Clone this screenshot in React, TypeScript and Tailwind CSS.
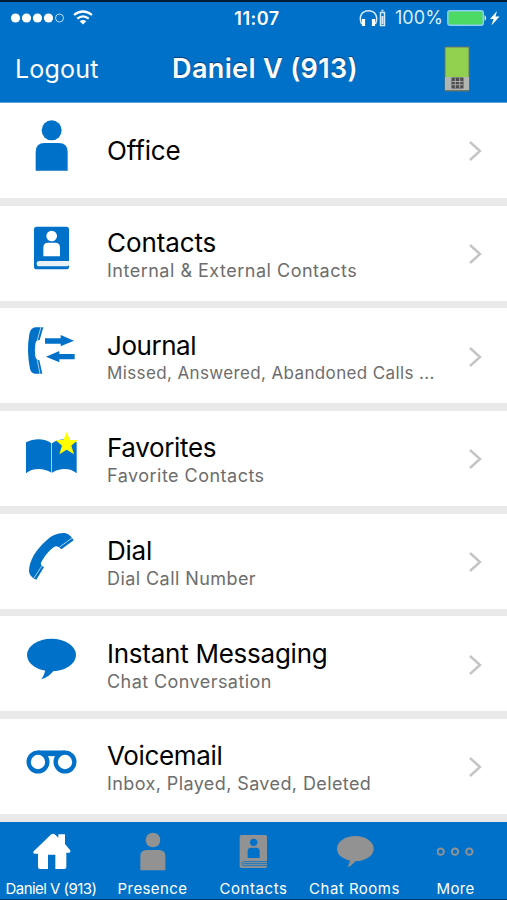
import type { ReactNode } from "react";

type IconProps = { className?: string };

function PersonIcon({ className }: IconProps) {
  return (
    <svg viewBox="0 0 180 285" className={className} fill="currentColor">
      <circle cx="92" cy="82" r="30" />
      <path d="M44 203v-56q0-27 27-27h42q27 0 27 27v56z" />
    </svg>
  );
}

function ContactsIcon({ className }: IconProps) {
  return (
    <svg viewBox="0 0 180 285" className={className} fill="currentColor">
      <rect x="39" y="62" width="105" height="128" rx="8" />
      <circle cx="92" cy="90" r="16" fill="#fff" />
      <path d="M67 151v-26q0-15 14-15h22q14 0 14 15v26z" fill="#fff" />
      <path d="M145 165H55q-8 0-8 8t8 8h82q6 0 9-7z" fill="#e9f1f8" />
    </svg>
  );
}

function JournalIcon({ className }: IconProps) {
  return (
    <svg viewBox="0 0 180 285" className={className} fill="currentColor">
      <path d="M42 58H67L56 96Q45 94 43 108Q40 126 43 145Q45 157 55 157L64 197H42Q30 196 27 182Q16 130 25 78Q29 60 42 58z" />
      <path d="M60 57L49 96M49 157l8 41" stroke="#fff" strokeWidth="2" fill="none" />
      <path d="M72 91h47V81l40 17-40 17v-8H72zM75 146l40-17v9h46v16h-46v9z" />
    </svg>
  );
}

function FavoritesIcon({ className }: IconProps) {
  return (
    <svg viewBox="0 0 180 285" className={className} fill="currentColor">
      <path d="M15 94q18-9 35-9 26 0 41 12v88q-18-11-38-11-23 0-38 13z" />
      <path d="M93 97q15-12 41-12 18 0 33 9v93q-15-13-36-13-21 0-38 11z" />
      <path d="M137 63l10 24h23l-19 17 8 26-22-14-22 14 8-26-19-17h23z" fill="#ffff00" />
    </svg>
  );
}

function DialIcon({ className }: IconProps) {
  return (
    <svg viewBox="0 0 180 285" className={className} fill="currentColor">
      <path d="M24 172C25 138 45 107 77 79C90 66 108 57 127 57C140 57 150 65 158 79L121 106Q113 96 104 97C88 103 68 130 59 149Q62 158 69 159L46 197Q26 190 24 172z" />
      <path d="M153 72L116 99M63 155L39 192" stroke="#fff" strokeWidth="2" fill="none" />
    </svg>
  );
}

function ChatIcon({ className }: IconProps) {
  return (
    <svg viewBox="0 0 180 285" className={className} fill="currentColor">
      <ellipse cx="91.500" cy="117" rx="73.500" ry="49" />
      <path d="M74 160q-4 18-13 30 25-8 38-28z" />
    </svg>
  );
}

function VoicemailIcon({ className }: IconProps) {
  return (
    <svg viewBox="0 0 180 285" className={className} fill="#fff" stroke="currentColor">
      <path d="M51 103h81" strokeWidth="17" />
      <circle cx="51" cy="129" r="28" strokeWidth="13" />
      <circle cx="132" cy="129" r="28" strokeWidth="13" />
    </svg>
  );
}

function HomeTabIcon() {
  return (
    <svg viewBox="0 0 102 180" className="h-[60px] w-[34px] overflow-visible" fill="currentColor">
      <path d="M-1 88L52 37q5-4 10 0l11 10V37h20v29l15 18q4 4-1 8h-10v44q0 5-6 5H64V98H42v43H18q-6 0-6-6V95H2q-7-1-3-7z" />
    </svg>
  );
}

function PersonTabIcon() {
  return (
    <svg viewBox="0 0 102 180" className="h-[60px] w-[34px]" fill="currentColor">
      <circle cx="51" cy="54" r="22" />
      <path d="M13 145v-42q0-19 19-19h37q19 0 19 19v42z" />
    </svg>
  );
}

function ContactsTabIcon() {
  return (
    <svg viewBox="0 0 102 180" className="h-[60px] w-[34px]" fill="currentColor">
      <rect x="8" y="39" width="82" height="99" rx="5" />
      <circle cx="50" cy="61" r="11" fill="#0071c8" />
      <path d="M32 108V88q0-11 10-11h16q10 0 10 11v20z" fill="#0071c8" />
      <path d="M90 119H22q-8 0-8 6t8 6h68M20 125h70" fill="none" stroke="#0071c8" strokeWidth="2.500" />
    </svg>
  );
}

function ChatTabIcon() {
  return (
    <svg viewBox="0 0 114 180" className="h-[60px] w-[38px]" fill="currentColor">
      <ellipse cx="58" cy="80" rx="55" ry="38" />
      <path d="M43 112q-2 13-8 23 16-6 26-22z" />
    </svg>
  );
}

function MoreTabIcon() {
  return (
    <svg viewBox="0 0 114 180" className="h-[60px] w-[38px]" fill="none" stroke="currentColor" strokeWidth="6">
      <circle cx="11" cy="89" r="9.500" />
      <circle cx="54" cy="89" r="9.500" />
      <circle cx="97" cy="89" r="9.500" />
    </svg>
  );
}

function StatusBar() {
  return (
    <div className="grid h-[34px] grid-cols-[1fr_60px_1fr] items-center pr-[3px] pl-[10px]">
      <div className="flex items-center gap-[9px]">
        <svg viewBox="0 0 54 10" className="-mt-[2px] h-[10px] w-[54px]" fill="#fff">
          <circle cx="5.500" cy="5" r="4.600" />
          <circle cx="16.500" cy="5" r="4.600" />
          <circle cx="27.500" cy="5" r="4.600" />
          <circle cx="38.500" cy="5" r="4.600" />
          <circle cx="49.500" cy="5" r="4" fill="none" stroke="#b9dcf6" />
        </svg>
        <svg viewBox="0 0 20 15" className="-mt-[3px] h-[15px] w-[20px]" fill="none" stroke="#fff" strokeWidth="2.200">
          <path d="M1 5q9-7 18 0M4.300 8.600q5.700-4.500 11.400 0" />
          <path d="M6.700 11.200q3.300-2.400 6.600 0L10 14.600z" fill="#fff" stroke="none" />
        </svg>
      </div>
      <span className="-mt-[2px] text-center text-[18px] font-semibold tracking-[0.5px]">11:07</span>
      <div className="-mt-[2px] flex items-center justify-end pr-[3px]">
        <svg viewBox="0 0 27 18" className="h-[18px] w-[27px]" fill="none" stroke="#d6ebfb" strokeWidth="1.500">
          <path d="M2.500 15C-1 6 4 1.700 9.500 1.700S20 6 16.500 15" />
          <path d="M4.500 10v7M14.500 10v7" stroke="#fff" strokeWidth="3.200" />
          <path d="M21.500 3.500h4v13h-4zM22.500 1.500h2" />
          <path d="M23.500 7v8" strokeWidth="2" />
        </svg>
        <span className="ml-[9px] text-[18px] leading-none tracking-[0.1px] text-[#dceefc]">100%</span>
        <svg viewBox="0 0 54 18" className="ml-[4px] h-[18px] w-[54px]">
          <rect x=".8" y="1.800" width="35.500" height="14.500" rx="2" fill="#4cd964" stroke="#8ccdf5" strokeWidth="1.400" />
          <path d="M37.500 6q3.500 3 0 6z" fill="#d7f0ff" />
          <path d="M50 2l-7 8h3.500l-2 6.500 8-9h-4z" fill="#fff" />
        </svg>
      </div>
    </div>
  );
}

function PhoneStatusIcon() {
  return (
    <svg viewBox="0 0 26 46" className="h-[46px] w-[26px]">
      <rect x=".5" y=".5" width="25" height="45" rx="1" fill="#66776b" />
      <rect x="1.500" y="1.500" width="23" height="30" fill="#92d050" />
      <rect x="1" y="31" width="24" height="13" fill="#b0b5b1" />
      <path d="M7.500 31.500h12v11h-12z" fill="#4d4d4d" />
      <path d="M11.300 32v10M15.700 32v10M8 35.500h11M8 38.800h11" stroke="#bbb" strokeWidth=".8" />
    </svg>
  );
}

const ROW_ICON = "h-[95px] w-[60px]";

const items: { title: string; subtitle?: string; icon: ReactNode; titleClass: string; subClass?: string }[] = [
  { title: "Office", icon: <PersonIcon className={ROW_ICON} />, titleClass: "tracking-[-0.150px]" },
  {
    title: "Contacts",
    subtitle: "Internal & External Contacts",
    icon: <ContactsIcon className={ROW_ICON} />,
    titleClass: "tracking-[-0.100px]",
    subClass: "text-[18px] tracking-[0.500px]",
  },
  {
    title: "Journal",
    subtitle: "Missed, Answered, Abandoned Calls ...",
    icon: <JournalIcon className={ROW_ICON} />,
    titleClass: "tracking-[-0.450px]",
    subClass: "text-[17px] tracking-[0.370px]",
  },
  {
    title: "Favorites",
    subtitle: "Favorite Contacts",
    icon: <FavoritesIcon className={ROW_ICON} />,
    titleClass: "tracking-[-0.350px]",
    subClass: "text-[18px] tracking-[0.480px]",
  },
  {
    title: "Dial",
    subtitle: "Dial Call Number",
    icon: <DialIcon className={ROW_ICON} />,
    titleClass: "tracking-[-0.250px]",
    subClass: "text-[18px] tracking-[0.430px]",
  },
  {
    title: "Instant Messaging",
    subtitle: "Chat Conversation",
    icon: <ChatIcon className={ROW_ICON} />,
    titleClass: "tracking-[-0.250px]",
    subClass: "text-[18px] tracking-[0.430px]",
  },
  {
    title: "Voicemail",
    subtitle: "Inbox, Played, Saved, Deleted",
    icon: <VoicemailIcon className={ROW_ICON} />,
    titleClass: "tracking-[-0.350px]",
    subClass: "text-[18px] tracking-[0.400px]",
  },
];

const tabs = [
  { label: "Daniel V (913)", icon: <HomeTabIcon />, iconClass: "text-white", labelClass: "tracking-[-0.550px]" },
  { label: "Presence", icon: <PersonTabIcon />, iconClass: "text-[#929292]", labelClass: "tracking-[0.400px]" },
  { label: "Contacts", icon: <ContactsTabIcon />, iconClass: "text-[#929292]", labelClass: "tracking-[0.550px]" },
  { label: "Chat Rooms", icon: <ChatTabIcon />, iconClass: "text-[#929292]", labelClass: "tracking-[0.500px]" },
  { label: "More", icon: <MoreTabIcon />, iconClass: "text-[#929292]", labelClass: "tracking-[0.300px]" },
];

export default function App() {
  return (
    <div className="flex h-[900px] w-[507px] flex-col overflow-hidden bg-[#e9e9e9] font-['Inter',sans-serif]">
      <header className="h-[103px] shrink-0 border-t-2 border-b border-t-[#001c38] border-b-[#58a5dd] bg-[#0071c8] text-white">
        <StatusBar />
        <div className="grid h-[66px] grid-cols-[150px_230px_1fr] items-center">
          <span className="pt-[1px] pl-[15px] text-[25px] tracking-[0.2px]">Logout</span>
          <h1 className="pt-[1px] text-center text-[27px] font-semibold tracking-[0.350px] whitespace-nowrap [text-shadow:0_-1px_1px_#003f78]">
            Daniel V (913)
          </h1>
          <div className="flex justify-end pr-[37px]">
            <PhoneStatusIcon />
          </div>
        </div>
      </header>

      <main className="flex h-[719px] shrink-0 flex-col gap-[7.670px]">
        {items.map((item) => (
          <div key={item.title} className="flex h-[95px] shrink-0 items-center bg-white pl-[21px] text-[#0071c8]">
            {item.icon}
            <div className={`ml-[26px] flex-1 whitespace-nowrap ${item.subtitle ? "pt-[4.500px]" : ""}`}>
              <div className={`text-[26px] leading-[30px] text-black ${item.titleClass}`}>{item.title}</div>
              {item.subtitle && <div className={`leading-[25px] text-[#6d6d6d] ${item.subClass}`}>{item.subtitle}</div>}
            </div>
            <svg
              viewBox="0 0 14 22"
              className={`mr-[25px] h-[22px] w-[14px] ${item.subtitle ? "mt-[2px]" : ""}`}
              fill="none"
              stroke="#c4c4c6"
              strokeWidth="2.400"
            >
              <path d="M2 2l10 9-10 9" />
            </svg>
          </div>
        ))}
      </main>

      <nav className="grid h-[78px] shrink-0 grid-cols-[102px_101px_101px_101px_101px] border-b border-[#00386b] bg-[#0071c8] text-white">
        {tabs.map((tab) => (
          <div key={tab.label} className="flex flex-col items-center">
            <div className={`h-[56px] ${tab.iconClass}`}>{tab.icon}</div>
            <span className={`text-[15px] leading-[21px] whitespace-nowrap ${tab.labelClass}`}>{tab.label}</span>
          </div>
        ))}
      </nav>
    </div>
  );
}
